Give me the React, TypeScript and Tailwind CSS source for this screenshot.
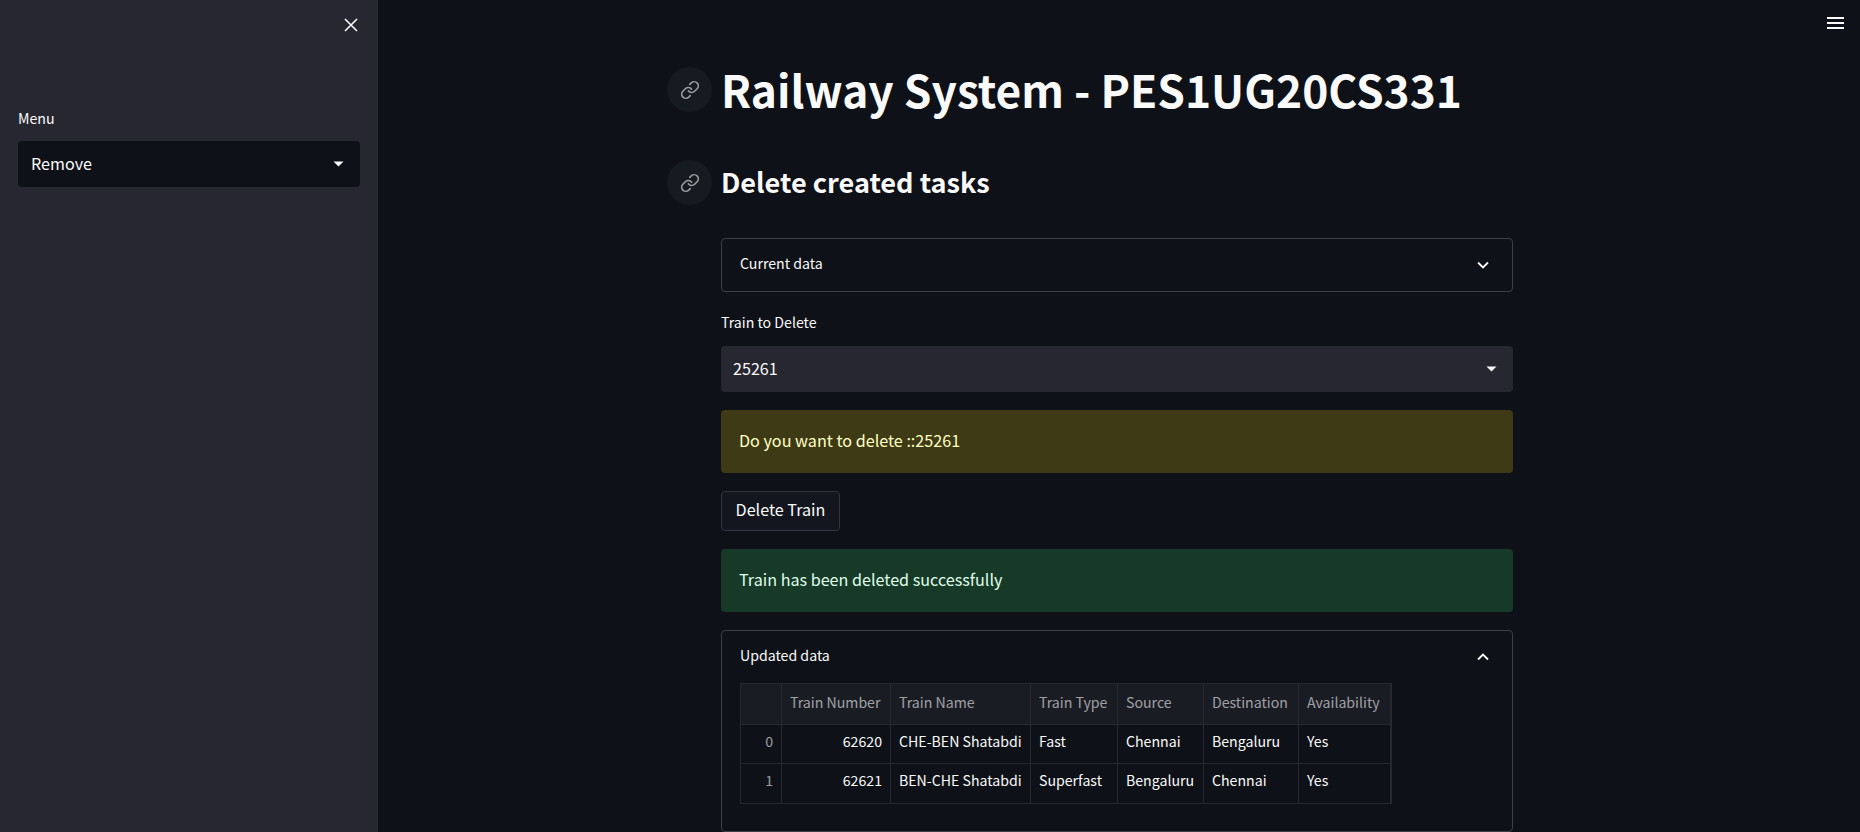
import { FiLink } from "react-icons/fi";

const FONT = "font-['Noto_Sans_CJK_SC','Liberation_Sans',sans-serif]";

const columns = ["", "Train Number", "Train Name", "Train Type", "Source", "Destination", "Availability"];

const rows = [
  ["0", "62620", "CHE-BEN Shatabdi", "Fast", "Chennai", "Bengaluru", "Yes"],
  ["1", "62621", "BEN-CHE Shatabdi", "Superfast", "Bengaluru", "Chennai", "Yes"],
];

const Caret = () => (
  <svg width="11" height="6" viewBox="0 0 11 6" className="shrink-0">
    <path d="M0.5 0.5 H10.5 L5.5 5.5 Z" fill="#fafafa" />
  </svg>
);

const Chevron = ({ up }: { up?: boolean }) => (
  <svg width="12" height="8" viewBox="0 0 12 8" className={up ? "rotate-180" : ""}>
    <path d="M1 1.5 L6 6.5 L11 1.5" fill="none" stroke="#fafafa" strokeWidth="1.8" />
  </svg>
);

const Anchor = () => (
  <div className="flex h-[45px] w-[45px] shrink-0 items-center justify-center rounded-full bg-[#161a21] text-[#9a9b9e]">
    <FiLink size={20} />
  </div>
);

const App = () => {
  return (
    <div className={`${FONT} flex h-[832px] w-[1860px] overflow-hidden bg-[#0e1117] text-[#fafafa]`}>
      {/* SIDEBAR */}
      <aside className="relative h-full w-[378px] shrink-0 bg-[#262730] px-[18px] pt-[108px]">
        <button className="absolute left-[344px] top-[18px]">
          <svg width="14" height="14" viewBox="0 0 14 14" className="block">
            <path d="M1 1 L13 13 M13 1 L1 13" stroke="#fafafa" strokeWidth="1.6" />
          </svg>
        </button>
        <label className="block text-[14.15px] leading-[20px]">Menu</label>
        <div className="mt-[13px] flex h-[46px] items-center justify-between rounded-[4px] bg-[#0e1117] pl-[13px] pr-[16px] text-[16.15px]">
          <span className="pb-[2px]">Remove</span>
          <Caret />
        </div>
      </aside>

      {/* MAIN */}
      <main className="relative h-full flex-1">
        <button className="absolute left-[1449px] top-[17px] flex w-[17px] flex-col gap-[3px]">
          <span className="block h-[2px] w-full bg-[#fafafa]"></span>
          <span className="block h-[2px] w-full bg-[#fafafa]"></span>
          <span className="block h-[2px] w-full bg-[#fafafa]"></span>
        </button>

        <div className="ml-[289px] w-[846px] pt-[67px]">
          <div className="flex h-[45px] items-center gap-[9px]">
            <Anchor />
            <h1 className="pb-[1px] text-[44.3px] font-bold leading-[45px] whitespace-nowrap">Railway System - PES1UG20CS331</h1>
          </div>
          <div className="mt-[48px] flex h-[45px] items-center gap-[9px]">
            <Anchor />
            <h2 className="pb-[3px] text-[27.1px] font-bold leading-[43px] whitespace-nowrap">Delete created tasks</h2>
          </div>

          <div className="ml-[54px] w-[792px]">
            <div className="mt-[33px] flex h-[54px] items-center justify-between rounded-[4px] border border-[#3d3f45] pl-[18px] pr-[23px]">
              <span className="pb-[2px] text-[14.15px]">Current data</span>
              <Chevron />
            </div>

            <label className="mt-[21px] block text-[14.15px] leading-[19px]">Train to Delete</label>
            <div className="mt-[14px] flex h-[46px] items-center justify-between rounded-[4px] bg-[#262730] pl-[12px] pr-[16px] text-[16.15px]">
              <span className="pb-[2px]">25261</span>
              <Caret />
            </div>

            <div className="mt-[18px] flex h-[63px] items-center rounded-[4px] bg-[#3e3a16] px-[18px] pb-[2px] text-[16.15px] text-[#ffffc2]">
              Do you want to delete ::25261
            </div>

            <button className="mt-[18px] block h-[40px] w-[119px] rounded-[4px] border border-[#33353d] bg-[#13161e] pb-[4px] text-[16.15px]">
              Delete Train
            </button>

            <div className="mt-[18px] flex h-[63px] items-center rounded-[4px] bg-[#173928] px-[18px] pb-[2px] text-[16.15px] text-[#dffde9]">
              Train has been deleted successfully
            </div>

            <div className="mt-[18px] h-[202px] rounded-[4px] border border-[#3d3f45] pl-[18px] pr-[23px]">
              <div className="flex h-[52px] items-center justify-between">
                <span className="pb-[2px] text-[14.15px]">Updated data</span>
                <Chevron up />
              </div>
              <div className="w-[652px] border-r border-[#262730] pr-[1px]">
                <table className="w-[650px] table-fixed border-collapse text-[14.15px]">
                  <colgroup>
                    <col className="w-[41px]" />
                    <col className="w-[109px]" />
                    <col className="w-[140px]" />
                    <col className="w-[87px]" />
                    <col className="w-[86px]" />
                    <col className="w-[95px]" />
                    <col className="w-[92px]" />
                  </colgroup>
                  <thead>
                    <tr className="h-[41px] bg-[#1a1c24] text-[#fafafa99]">
                      {columns.map((c) => (
                        <th key={c} className="border border-[#262730] px-[8px] pb-[3px] text-left font-normal whitespace-nowrap">
                          {c}
                        </th>
                      ))}
                    </tr>
                  </thead>
                  <tbody>
                    {rows.map((r, n) => (
                      <tr key={r[0]} className={n === 0 ? "h-[39px]" : "h-[40px]"}>
                        {r.map((v, i) => (
                          <td
                            key={i}
                            className={`border border-[#262730] px-[8px] pb-[5px] whitespace-nowrap ${
                              i === 0 ? "text-right text-[#fafafa99]" : i === 1 ? "text-right" : "text-left"
                            }`}
                          >
                            {v}
                          </td>
                        ))}
                      </tr>
                    ))}
                  </tbody>
                </table>
              </div>
            </div>
          </div>
        </div>
      </main>
    </div>
  );
};

export default App;
